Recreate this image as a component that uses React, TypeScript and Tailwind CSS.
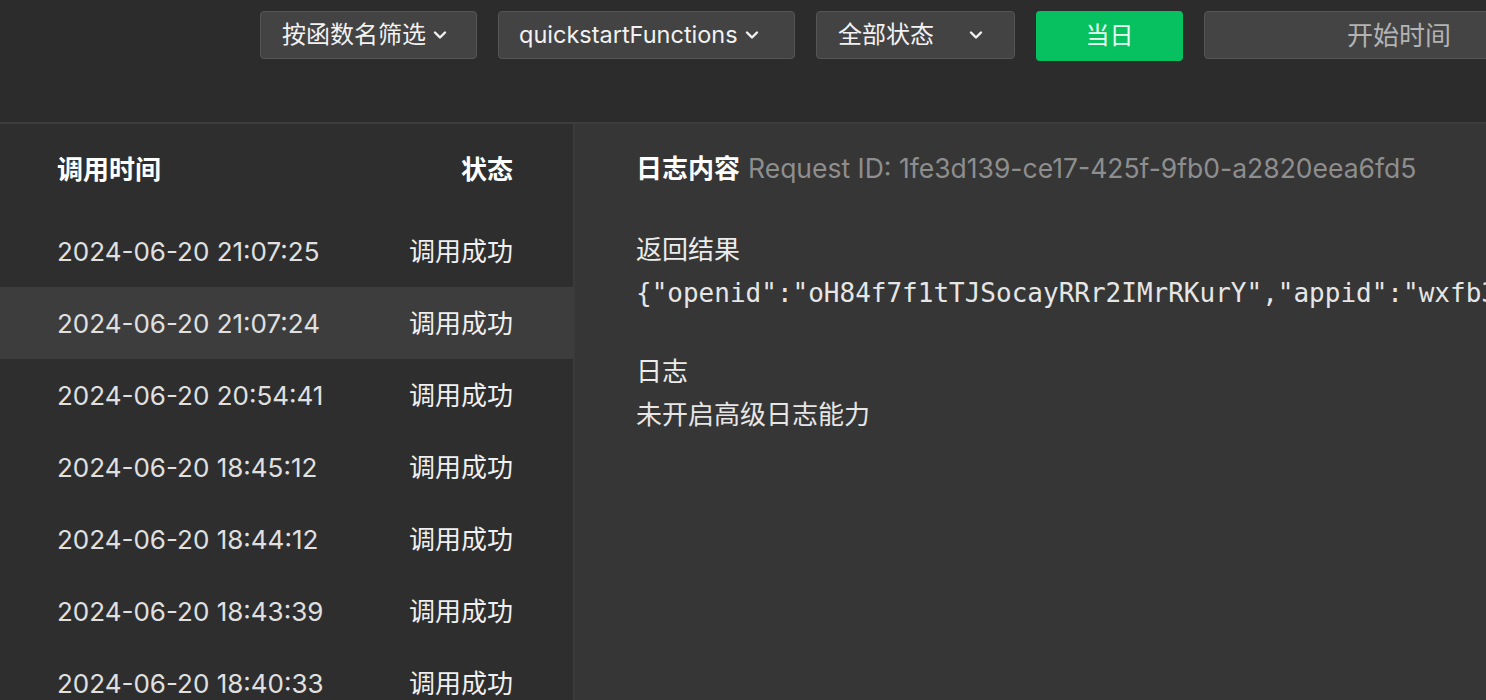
import React from "react";

const rows = [
  "2024-06-20 21:07:25",
  "2024-06-20 21:07:24",
  "2024-06-20 20:54:41",
  "2024-06-20 18:45:12",
  "2024-06-20 18:44:12",
  "2024-06-20 18:43:39",
  "2024-06-20 18:40:33",
];

const Chevron = () => (
  <svg width="14" height="10" viewBox="0 0 14 10" fill="none" className="shrink-0">
    <path d="M2 2.5 7 7.5 12 2.5" stroke="#f2f2f2" strokeWidth="2.4" strokeLinecap="round" strokeLinejoin="round" />
  </svg>
);

const font = "font-['Inter','Noto_Sans_CJK_SC',sans-serif]";

export default function App() {
  const selected = 1;

  return (
    <div className={`w-[1486px] h-[700px] overflow-hidden bg-[#2c2c2c] ${font} flex flex-col`}>
      {/* toolbar */}
      <div className="h-[122px] shrink-0 flex items-start pt-[11px] pl-[260px] gap-[21px] whitespace-nowrap overflow-hidden">
        <button className="w-[217px] shrink-0 h-[48px] flex items-center pl-[21px] gap-[7px] rounded-[4px] bg-[#434343] border border-[#555555] text-[24px] text-[#f2f2f2]">
          <span>按函数名筛选</span>
          <Chevron />
        </button>
        <button className="w-[297px] shrink-0 h-[48px] flex items-center pl-[20px] gap-[7px] rounded-[4px] bg-[#434343] border border-[#555555] text-[23.5px] text-[#f2f2f2]">
          <span>quickstartFunctions</span>
          <Chevron />
        </button>
        <button className="w-[199px] shrink-0 h-[48px] flex items-center justify-between pl-[21px] pr-[31px] rounded-[4px] bg-[#434343] border border-[#555555] text-[24px] text-[#f2f2f2]">
          <span>全部状态</span>
          <Chevron />
        </button>
        <button className="w-[147px] shrink-0 h-[50px] flex items-center justify-center rounded-[4px] bg-[#07c160] text-[24px] text-[#e8fff2]">
          当日
        </button>
        <div className="w-[320px] shrink-0 h-[48px] flex items-center pl-[142px] rounded-[4px] bg-[#444444] border border-[#555555] text-[26px] text-[#b3b3b3]">
          开始时间
        </div>
      </div>

      <div className="h-[2px] bg-[#3d3d3d] shrink-0" />

      <div className="flex flex-1 min-h-0">
        {/* list */}
        <div className="w-[573px] shrink-0 bg-[#2e2e2e]">
          <div className="h-[91px] flex items-center justify-between pl-[57px] pr-[60px] text-[26px] font-semibold text-white">
            <span>调用时间</span>
            <span>状态</span>
          </div>
          {rows.map((t, i) => (
            <div
              key={t}
              className={`h-[72px] flex items-center justify-between pl-[57px] pr-[60px] text-[26px] ${i === selected ? "bg-[#3d3d3d]" : ""}`}
            >
              <span className="text-[#e0e0e0]">{t}</span>
              <span className="text-[#f0f0f0]">调用成功</span>
            </div>
          ))}
        </div>
        <div className="w-[2px] shrink-0 bg-[#3b3b3b]" />

        {/* detail */}
        <div className="flex-1 min-w-0 bg-[#363636] pl-[61px] pt-[25px] whitespace-nowrap overflow-hidden">
          <div className="flex items-baseline gap-[8px] h-[36px]">
            <span className="text-[26px] font-semibold text-white">日志内容</span>
            <span className="text-[26.5px] text-[#8e8e8e]">Request ID: 1fe3d139-ce17-425f-9fb0-a2820eea6fd5</span>
          </div>
          <div className="mt-[48px] text-[26px] text-[#ececec] leading-[34px]">返回结果</div>
          <div className="mt-[9px] font-['DejaVu_Sans_Mono',monospace] text-[26px] text-[#e6e6e6] leading-[34px] overflow-hidden">
            {'{"openid":"oH84f7f1tTJSocayRRr2IMrRKurY","appid":"wxfb3c9e1d2a7b4f10"}'}
          </div>
          <div className="mt-[45px] text-[26px] text-[#ececec] leading-[34px]">日志</div>
          <div className="mt-[9px] text-[26px] text-[#e6e6e6] leading-[34px]">未开启高级日志能力</div>
        </div>
      </div>
    </div>
  );
}
